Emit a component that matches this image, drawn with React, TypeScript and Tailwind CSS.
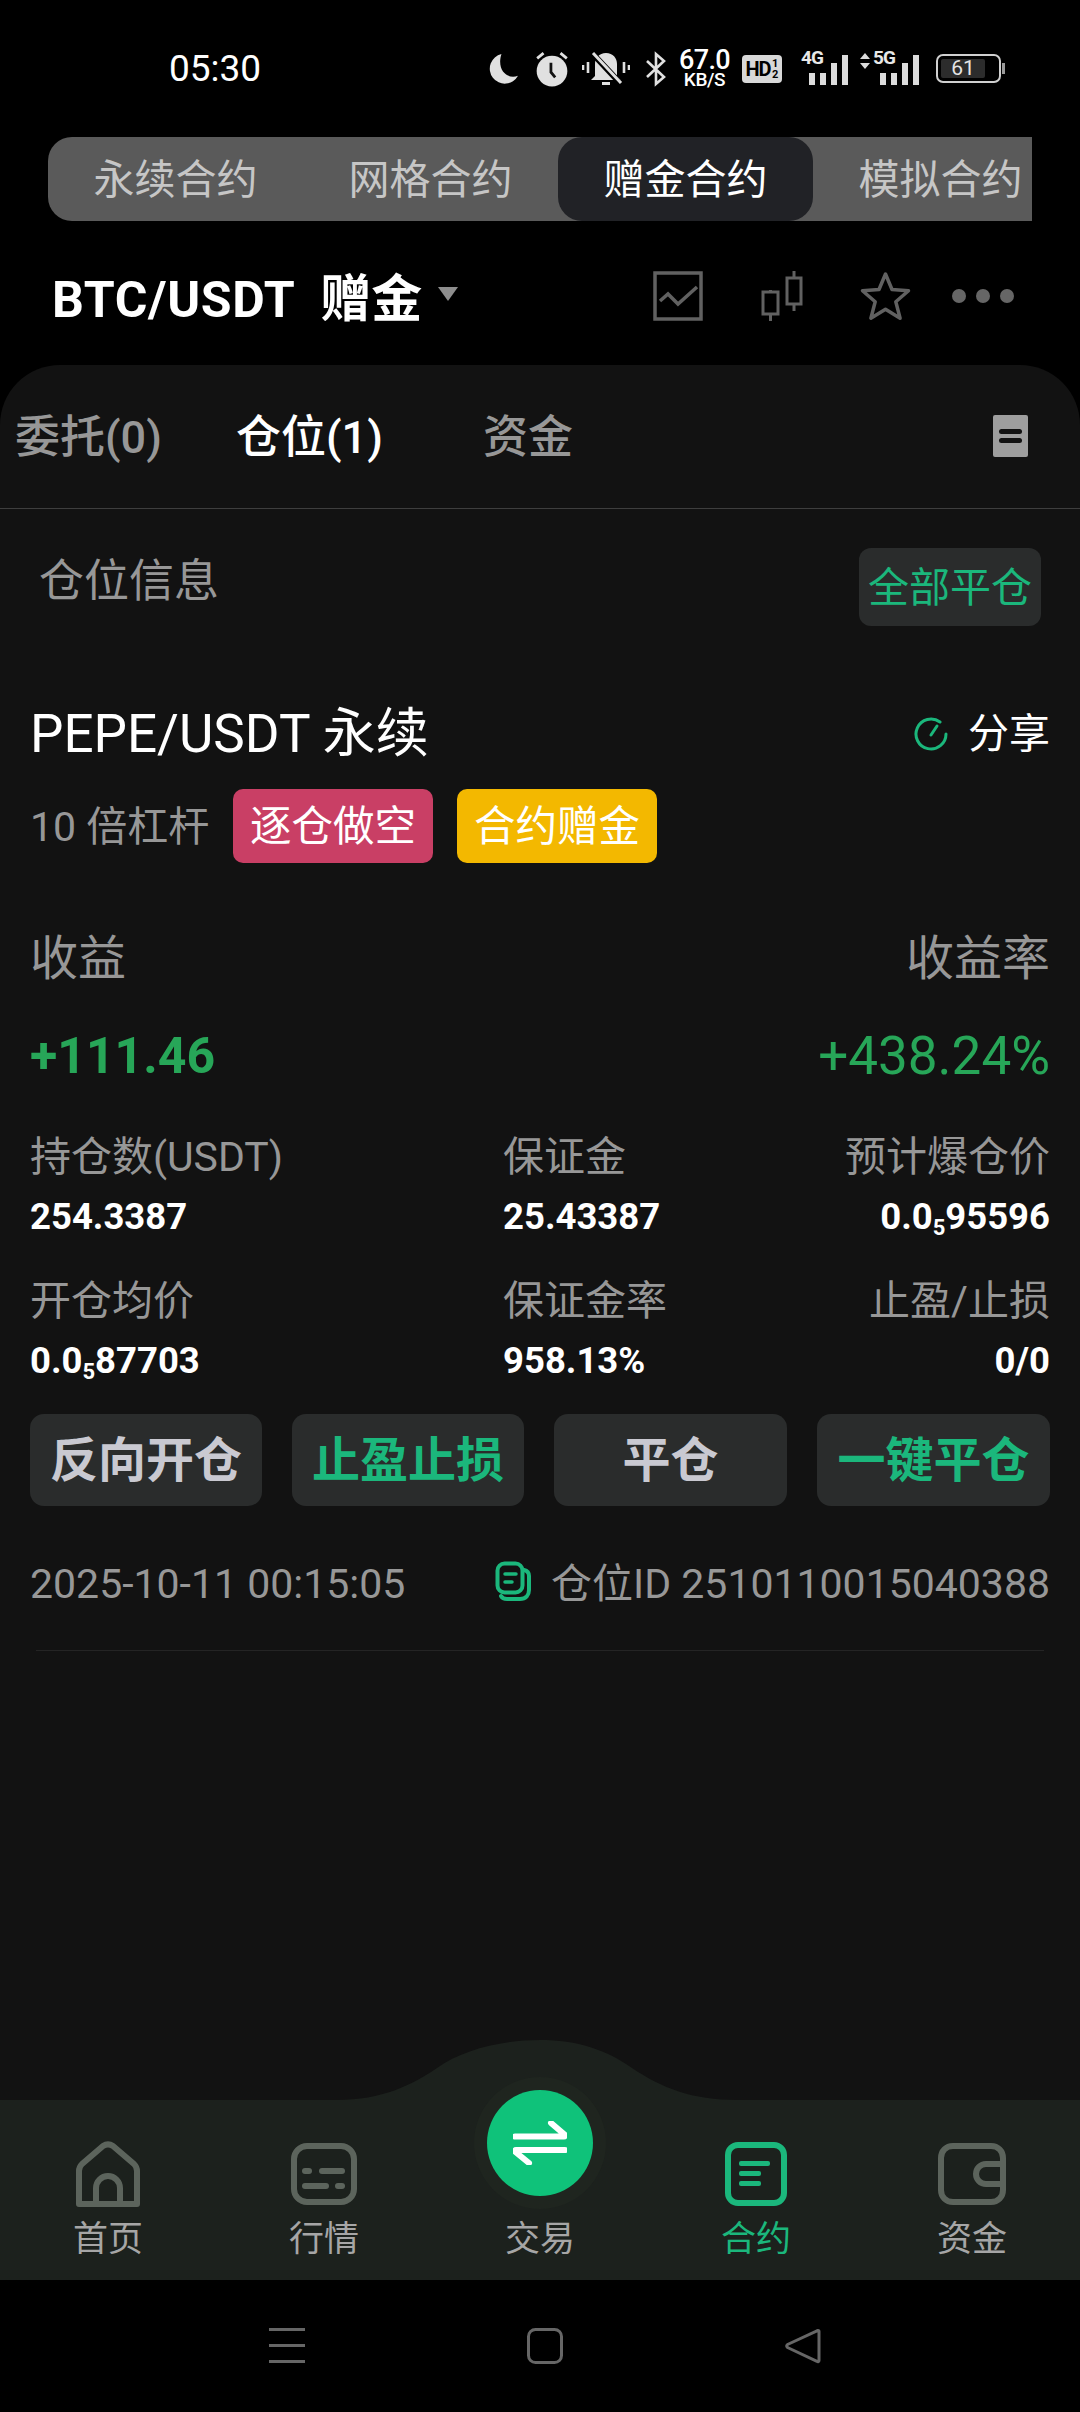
const GREEN = "#1bb77c";

function Sub({ a, b }: { a: string; b: string }) {
  return (
    <>
      0.0<sub className="text-[22px] font-bold">5</sub>
      {a}
      {b}
    </>
  );
}

function StatusBar() {
  return (
    <div className="h-[137px] flex items-center pl-[169px] pr-[75px] text-[#e4e4e4]">
      <span className="text-[37px] leading-none text-white">05:30</span>
      <div className="ml-auto flex items-center">
        <svg width="30" height="30" viewBox="0 0 29 29" className="mr-[17px]">
          <path d="M13 0 A14.5 14.5 0 1 0 29 21 C19 25 8 16 13 0Z" fill="#e0e0e0" />
        </svg>
        <svg width="34" height="36" viewBox="0 0 32 34" className="mr-[13px]">
          <circle cx="16" cy="19" r="14.5" fill="#e0e0e0" />
          <path d="M15 11v9l4 5" stroke="#111" strokeWidth="2.6" fill="none" />
          <path d="M2 7l6-5M30 7l-6-5" stroke="#e0e0e0" strokeWidth="2.6" />
        </svg>
        <svg width="48" height="36" viewBox="0 0 48 34" className="mr-[15px]">
          <path d="M24 1c-7 0-11 5-11 11v12l-4 4h30l-4-4V12c0-6-4-11-11-11Z" fill="#e0e0e0" />
          <path d="M20 30h8v3h-8z" fill="#e0e0e0" />
          <path d="M10 1l29 31" stroke="#000" strokeWidth="6" />
          <path d="M11 1l28 30" stroke="#e0e0e0" strokeWidth="3" />
          <path d="M1 13v5M6 10v11M42 10v11M47 13v5" stroke="#e0e0e0" strokeWidth="2.6" />
        </svg>
        <svg width="22" height="36" viewBox="0 0 22 34" className="mr-[15px]">
          <path d="M2 9l17 16-8 7V2l8 7L2 25" stroke="#e0e0e0" strokeWidth="2.6" fill="none" />
        </svg>
        <div className="w-[45px] mr-[15px] flex flex-col items-center font-medium text-white">
          <span className="text-[27px] leading-[22px] tracking-[-0.6px]">67.0</span>
          <span className="text-[19px] leading-[18px] tracking-[-0.4px]">KB/S</span>
        </div>
        <div className="w-[40px] h-[28px] mr-[19px] rounded-[4px] bg-[#d8d8d8] text-black flex items-center justify-center font-bold">
          <span className="text-[20px] leading-none tracking-[-1px]">HD</span>
          <span className="text-[11px] leading-[11px] ml-[1px] w-[7px] text-center">1 2</span>
        </div>
        <div className="relative w-[47px] h-[32px] mr-[12px] flex items-end justify-end gap-[5px]">
          <span className="absolute left-0 top-[-5px] text-[19px] font-bold leading-none tracking-[-0.8px] text-[#e8e8e8]">4G</span>
          <i className="w-[6px] h-[12px] bg-[#dcdcdc]" />
          <i className="w-[6px] h-[12px] bg-[#dcdcdc]" />
          <i className="w-[6px] h-[22px] bg-[#dcdcdc]" />
          <i className="w-[6px] h-[30px] bg-[#dcdcdc]" />
        </div>
        <div className="relative w-[59px] h-[32px] mr-[17px] flex items-end justify-end gap-[5px]">
          <span className="absolute left-[13px] top-[-5px] text-[19px] font-bold leading-none tracking-[-0.8px] text-[#e8e8e8]">5G</span>
          <svg width="10" height="16" viewBox="0 0 10 16" className="absolute left-0 top-0">
            <path d="M5 0l5 6H0zM5 16l5-6H0z" fill="#dcdcdc" />
          </svg>
          <i className="w-[6px] h-[12px] bg-[#dcdcdc]" />
          <i className="w-[6px] h-[12px] bg-[#dcdcdc]" />
          <i className="w-[6px] h-[22px] bg-[#dcdcdc]" />
          <i className="w-[6px] h-[30px] bg-[#dcdcdc]" />
        </div>
        <div className="flex items-center">
          <div className="w-[65px] h-[29px] rounded-[7px] border-[2px] border-[#d0d0d0] p-[3px]">
            <div className="w-[44px] h-full rounded-[2px] bg-[#2c2c2c] flex items-center justify-center text-[21px] leading-none text-[#e4e4e4]">61</div>
          </div>
          <i className="w-[3px] h-[11px] ml-[1px] bg-[#9a9a9a]" />
        </div>
      </div>
    </div>
  );
}

function TopTabs() {
  const tabs = ["永续合约", "网格合约", "赠金合约", "模拟合约"];
  return (
    <div className="ml-[48px] w-[984px] h-[84px] bg-[#5a5a5a] rounded-l-[24px] overflow-hidden flex">
      {tabs.map((t, i) => (
        <div
          key={t}
          className={
            i === 2
              ? "w-[255px] shrink-0 h-full pt-[4px] rounded-[24px] bg-[#212226] text-white text-[41px] flex items-center justify-center"
              : "w-[255px] shrink-0 h-full pt-[4px] text-[#c6c6c6] text-[41px] flex items-center justify-center"
          }
        >
          {t}
        </div>
      ))}
    </div>
  );
}

function Header() {
  return (
    <div className="h-[144px] flex items-center pl-[52px] pr-[66px] pt-[8px]">
      <span className="text-[50px] leading-none font-bold text-white tracking-[0.6px] pt-[5px]">BTC/USDT</span>
      <span className="ml-[25px] text-[51px] leading-none font-bold text-white pt-[5px]">赠金</span>
      <svg width="20" height="14" viewBox="0 0 20 14" className="ml-[16px] mb-[6px]">
        <path d="M0 0h20L10 14Z" fill="#8e8e8e" />
      </svg>
      <svg width="50" height="50" viewBox="0 0 50 50" className="ml-auto mb-[2px]">
        <rect x="2" y="2" width="46" height="46" fill="none" stroke="#616161" strokeWidth="3.5" />
        <path d="M7 30l8-7 10 10 19-17" fill="none" stroke="#616161" strokeWidth="3.5" />
      </svg>
      <svg width="42" height="50" viewBox="0 0 42 50" className="ml-[58px] mb-[2px]">
        <rect x="2" y="21" width="15" height="22" fill="none" stroke="#616161" strokeWidth="3" />
        <rect x="26" y="7" width="14" height="26" fill="none" stroke="#616161" strokeWidth="3" />
        <path d="M9.5 20v-1M9.5 44v6M33 0v7M33 33v7" stroke="#616161" strokeWidth="3" />
      </svg>
      <svg width="51" height="50" viewBox="0 0 51 50" className="ml-[57px] mb-[2px]">
        <path d="M25.5 3l6.5 15.5 16.5 1.2-12.7 11 4.3 16.5-14.6-9-14.6 9 4.3-16.5L2.5 19.7 19 18.5Z" fill="none" stroke="#616161" strokeWidth="3.5" strokeLinejoin="round" />
      </svg>
      <div className="ml-[41px] mb-[2px] flex gap-[10px]">
        <i className="w-[14px] h-[14px] rounded-full bg-[#666666]" />
        <i className="w-[14px] h-[14px] rounded-full bg-[#666666]" />
        <i className="w-[14px] h-[14px] rounded-full bg-[#666666]" />
      </div>
    </div>
  );
}

function Stat({ label, value, align }: { label: string; value: React.ReactNode; align?: boolean }) {
  return (
    <div className={align ? "text-right" : ""}>
      <div className="text-[41px] leading-[50px] pt-[1px] h-[50px] text-[#979797]">{label}</div>
      <div className="mt-[14px] text-[36.5px] leading-[44px] font-bold text-white">{value}</div>
    </div>
  );
}

function Positions() {
  const btns: [string, boolean][] = [
    ["反向开仓", false],
    ["止盈止损", true],
    ["平仓", false],
    ["一键平仓", true],
  ];
  return (
    <div className="flex-1 bg-[#121212] rounded-t-[60px] overflow-hidden">
      <div className="h-[144px] border-b border-[#3e3e3e] flex items-center font-medium text-[45px] leading-none">
        <span className="ml-[15px] w-[221px] pt-[2px] text-[#979797]">委托(0)</span>
        <span className="w-[247px] pt-[2px] text-white">仓位(1)</span>
        <span className="pt-[2px] text-[#979797]">资金</span>
        <div className="ml-auto mr-[52px] w-[35px] h-[42px] rounded-[2px] bg-[#9e9e9e] flex flex-col justify-center gap-[4px] px-[6px] mb-[2px]">
          <i className="h-[5px] rounded-full bg-[#121212]" />
          <i className="h-[5px] rounded-full bg-[#121212]" />
        </div>
      </div>

      <div className="flex items-start justify-between pl-[39px] pr-[39px] pt-[39px]">
        <span className="text-[45px] leading-[68px] h-[64px] text-[#979797]">仓位信息</span>
        <button className="w-[182px] h-[78px] pt-[4px] rounded-[12px] bg-[#2a2c2c] text-[41px] text-[#1bb77c]">全部平仓</button>
      </div>

      <div className="mt-[78px] px-[30px] flex items-center justify-between h-[60px]">
        <span className="text-[53px] leading-[60px] text-white">PEPE/USDT 永续</span>
        <div className="flex items-center">
          <svg width="34" height="34" viewBox="0 0 34 34" className="mr-[20px]">
            <path d="M26 5A15 15 0 1 0 32 17" fill="none" stroke={GREEN} strokeWidth="3" strokeLinecap="round" />
            <path d="M23 9l-6 9" fill="none" stroke={GREEN} strokeWidth="3" strokeLinecap="round" />
          </svg>
          <span className="text-[41px] leading-[50px] text-white">分享</span>
        </div>
      </div>

      <div className="mt-[25px] pl-[30px] flex items-center h-[74px]">
        <span className="w-[203px] pt-[3px] text-[41px] text-[#979797]">10 倍杠杆</span>
        <span className="w-[200px] h-[74px] pt-[3px] rounded-[10px] bg-[#c93f65] text-white text-[41.5px] flex items-center justify-center">逐仓做空</span>
        <span className="ml-[24px] w-[200px] h-[74px] pt-[3px] rounded-[10px] bg-[#f3b800] text-white text-[41.5px] flex items-center justify-center">合约赠金</span>
      </div>

      <div className="mt-[65px] px-[30px] flex justify-between text-[48px] leading-[62px] h-[60px] text-[#979797]">
        <span>收益</span>
        <span>收益率</span>
      </div>

      <div className="mt-[38px] px-[30px] flex justify-between leading-[60px] text-[#27a658]">
        <span className="text-[50px] font-bold">+111.46</span>
        <span className="text-[53px]">+438.24%</span>
      </div>

      <div className="mt-[45px] px-[30px] grid grid-cols-[473px_1fr_auto] gap-y-[36px]">
        <Stat label="持仓数(USDT)" value="254.3387" />
        <Stat label="保证金" value="25.43387" />
        <Stat label="预计爆仓价" value={<Sub a="95" b="596" />} align />
        <Stat label="开仓均价" value={<Sub a="87" b="703" />} />
        <Stat label="保证金率" value="958.13%" />
        <Stat label="止盈/止损" value="0/0" align />
      </div>

      <div className="mt-[31px] px-[30px] grid grid-cols-[232px_232px_233px_233px] gap-[30px]">
        {btns.map(([t, g]) => (
          <button
            key={t}
            className={
              g
                ? "h-[92px] pt-[2px] rounded-[14px] bg-[#2a2c2c] text-[48px] font-bold text-[#1bb77c]"
                : "h-[92px] pt-[2px] rounded-[14px] bg-[#2a2c2c] text-[48px] font-bold text-[#c9c9d1]"
            }
          >
            {t}
          </button>
        ))}
      </div>

      <div className="mt-[53px] px-[30px] flex items-center justify-between text-[41px] leading-[50px] text-[#979797]">
        <span>2025-10-11 00:15:05</span>
        <div className="flex items-center">
          <svg width="36" height="40" viewBox="0 0 36 40" className="mr-[20px] mb-[6px]">
            <rect x="2.5" y="2.5" width="25" height="29" rx="7" fill="none" stroke={GREEN} strokeWidth="4" />
            <path d="M29 9c4 1 5 3 5 6v14c0 5-3 9-9 9H12c-3 0-5-1-6-3" fill="none" stroke={GREEN} strokeWidth="4" strokeLinecap="round" />
            <path d="M10 13h11M10 21h7" stroke={GREEN} strokeWidth="3.5" strokeLinecap="round" />
          </svg>
          <span>仓位ID 2510110015040388</span>
        </div>
      </div>

      <div className="mt-[41px] mx-[36px] h-px bg-[#242424]" />
    </div>
  );
}

const NAV = "#5c645c";

function HomeIcon() {
  return (
    <svg width="66" height="66" viewBox="0 0 66 66">
      <path d="M4 63V30c0-3 1-5 3-7L28 5c3-2 7-2 10 0l21 18c2 2 3 4 3 7v33Z" fill="none" stroke={NAV} strokeWidth="6" strokeLinejoin="round" />
      <path d="M21 62V47a12 12 0 0 1 24 0v15" fill="none" stroke={NAV} strokeWidth="6" />
    </svg>
  );
}
function MarketIcon() {
  return (
    <svg width="66" height="62" viewBox="0 0 66 62">
      <rect x="3" y="3" width="60" height="56" rx="13" fill="none" stroke={NAV} strokeWidth="6" />
      <rect x="11" y="25" width="10" height="6" rx="3" fill={NAV} />
      <rect x="28" y="25" width="26" height="6" rx="3" fill={NAV} />
      <rect x="11" y="40" width="27" height="6" rx="3" fill={NAV} />
      <rect x="44" y="40" width="10" height="6" rx="3" fill={NAV} />
    </svg>
  );
}
function ContractIcon() {
  return (
    <svg width="62" height="64" viewBox="0 0 62 64">
      <rect x="3" y="3" width="56" height="58" rx="10" fill="none" stroke={GREEN} strokeWidth="6" />
      <rect x="14" y="19" width="31" height="5" rx="2" fill={GREEN} />
      <rect x="14" y="29" width="22" height="5" rx="2" fill={GREEN} />
      <rect x="14" y="39" width="22" height="5" rx="2" fill={GREEN} />
    </svg>
  );
}
function WalletIcon() {
  return (
    <svg width="68" height="62" viewBox="0 0 68 62">
      <path d="M65 18V15C65 8 60 3 53 3H15C8 3 3 8 3 15v32c0 7 5 12 12 12h38c7 0 12-5 12-12v-5" fill="none" stroke={NAV} strokeWidth="6" />
      <path d="M65 21H48a10 10 0 0 0 0 20h17Z" fill="none" stroke={NAV} strokeWidth="6" />
    </svg>
  );
}

function BottomNav() {
  const items: [string, React.ReactNode, boolean][] = [
    ["首页", <HomeIcon key="h" />, false],
    ["行情", <MarketIcon key="m" />, false],
    ["交易", null, false],
    ["合约", <ContractIcon key="c" />, true],
    ["资金", <WalletIcon key="w" />, false],
  ];
  return (
    <div className="relative h-[180px] bg-[#1c211d] grid grid-cols-5">
      <svg width="400" height="61" viewBox="0 0 400 61" className="absolute left-[337px] top-[-60px]">
        <path d="M0 61V60C45 60 75 45 100 28 125 10 165 0 203 0 240 0 270 10 295 28 325 48 355 60 400 60V61Z" fill="#1c211d" />
      </svg>
      <div className="absolute left-[474px] top-[-23px] w-[132px] h-[132px] rounded-full bg-[#1f251f] flex items-center justify-center">
        <div className="w-[106px] h-[106px] rounded-full bg-[#0fc27a] flex items-center justify-center">
          <svg width="54" height="44" viewBox="0 0 54 44">
            <path d="M2 15.5h49c1 0 1-1 .5-2L38 2" fill="none" stroke="#fff" strokeWidth="6" strokeLinecap="round" strokeLinejoin="round" />
            <path d="M52 29H3c-1 0-1 1-.5 2L16 42" fill="none" stroke="#fff" strokeWidth="6" strokeLinecap="round" strokeLinejoin="round" />
          </svg>
        </div>
      </div>
      {items.map(([label, icon, active]) => (
        <div key={label} className="flex flex-col items-center pt-[41px]">
          <div className="h-[66px] flex items-center justify-center">{icon}</div>
          <span className={active ? "mt-[13px] text-[35px] leading-[40px] text-[#1bb77c]" : "mt-[13px] text-[35px] leading-[40px] text-[#a6a6a6]"}>{label}</span>
        </div>
      ))}
    </div>
  );
}

function SystemBar() {
  return (
    <div className="h-[132px] bg-black flex items-start justify-center pt-[48px] pl-[10px]">
      <svg width="36" height="35" viewBox="0 0 36 35">
        <path d="M0 1.5h36M0 17.5h36M0 33.5h36" stroke="#666" strokeWidth="3" />
      </svg>
      <svg width="36" height="36" viewBox="0 0 36 36" className="ml-[222px]">
        <rect x="1.5" y="1.5" width="33" height="33" rx="7" fill="none" stroke="#666" strokeWidth="3" />
      </svg>
      <svg width="36" height="36" viewBox="0 0 36 36" className="ml-[222px]">
        <path d="M33 2.5c.5 0 1 .5 1 1v29c0 1-1 1.500-2 .8L2.500 19.500c-1-1-1-2 0-3L32 2.800Z" fill="none" stroke="#666" strokeWidth="3" strokeLinejoin="round" />
      </svg>
    </div>
  );
}

export default function App() {
  return (
    <div className="w-[1080px] h-[2412px] bg-black flex flex-col overflow-hidden font-['Roboto','Noto_Sans_CJK_SC',sans-serif]">
      <StatusBar />
      <TopTabs />
      <Header />
      <Positions />
      <BottomNav />
      <SystemBar />
    </div>
  );
}
